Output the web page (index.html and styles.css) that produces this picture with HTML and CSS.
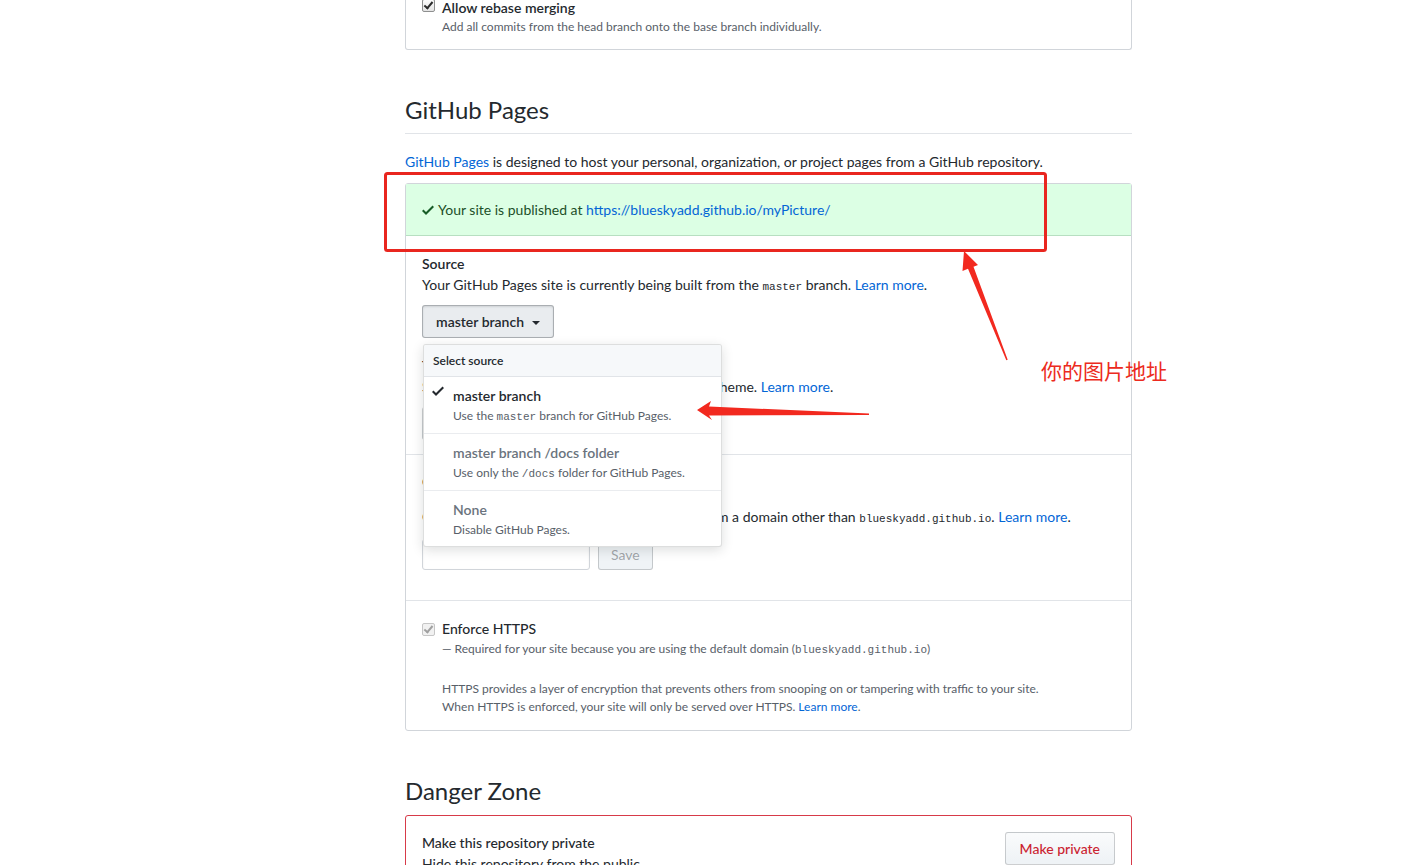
FILE: index.html
```html
<!DOCTYPE html>
<html lang="en">
  <head>
    <meta charset="UTF-8" />
    <title>Options</title>
    <link rel="stylesheet" href="styles.css">
  </head>
  <body>
    <div class="container">
      <div class="box box-top">
        <div class="form-checkbox">
          <input type="checkbox" checked />
          <label>Allow rebase merging</label>
          <p class="note">Add all commits from the head branch onto the base branch individually.</p>
        </div>
      </div>

      <h2 class="subhead">GitHub Pages</h2>
      <p class="intro"><a href="#">GitHub Pages</a> is designed to host your personal, organization, or project pages from a GitHub repository.</p>

      <div class="box">
        <div class="flash-success">
          <svg class="octicon" width="12" height="16" viewBox="0 0 12 16"><path d="M12 5l-8 8-4-4 1.5-1.5L4 10l6.5-6.5L12 5z"/></svg>
          Your site is published at <a href="#">https://blueskyadd.github.io/myPicture/</a>
        </div>

        <div class="box-row">
          <h4>Source</h4>
          <p>Your GitHub Pages site is currently being built from the <code>master</code> branch. <a href="#">Learn more</a>.</p>

          <div class="select-menu">
            <button class="btn selected">master branch <span class="caret"></span></button>

            <div class="select-menu-modal">
              <div class="select-menu-header">Select source</div>
              <div class="select-menu-item">
                <svg class="octicon check" width="12" height="16" viewBox="0 0 12 16"><path d="M12 5l-8 8-4-4 1.5-1.5L4 10l6.5-6.5L12 5z"/></svg>
                <div class="item-heading">master branch</div>
                <div class="description">Use the <code>master</code> branch for GitHub Pages.</div>
              </div>
              <div class="select-menu-item disabled">
                <div class="item-heading">master branch /docs folder</div>
                <div class="description">Use only the <code>/docs</code> folder for GitHub Pages.</div>
              </div>
              <div class="select-menu-item disabled">
                <div class="item-heading">None</div>
                <div class="description">Disable GitHub Pages.</div>
              </div>
            </div>
          </div>

          <h4 class="theme-heading">Theme chooser</h4>
          <p>Select a theme to publish your site with a Jekyll theme. <a href="#">Learn more</a>.</p>
          <button class="btn theme-btn">Choose a theme</button>
        </div>

        <div class="box-row">
          <h4>Custom domain</h4>
          <p class="domain-text">Custom domain allows you to serve your site from a domain other than <code>blueskyadd.github.io</code>. <a href="#">Learn more</a>.</p>
          <form class="domain-form">
            <input type="text" class="form-control" />
            <button type="button" class="btn" disabled>Save</button>
          </form>
        </div>

        <div class="box-row https-row">
          <div class="form-checkbox">
            <input type="checkbox" checked disabled />
            <label>Enforce HTTPS</label>
            <p class="note">— Required for your site because you are using the default domain (<code>blueskyadd.github.io</code>)</p>
          </div>
          <p class="https-info">
            HTTPS provides a layer of encryption that prevents others from snooping on or tampering with traffic to your site.<br />
            When HTTPS is enforced, your site will only be served over HTTPS. <a href="#">Learn more</a>.
          </p>
        </div>
      </div>

      <h2 class="subhead subhead-danger">Danger Zone</h2>
      <div class="box box-danger">
        <div class="box-row">
          <button class="btn btn-danger">Make private</button>
          <h4>Make this repository private</h4>
          <p>Hide this repository from the public.</p>
        </div>
      </div>
    </div>

    <!-- 截图上的红色标注 -->
    <div class="annotations">
      <svg width="1403" height="865" viewBox="0 0 1403 865">
        <rect x="385.5" y="173.5" width="660" height="77" rx="2" fill="none" stroke="#e9261f" stroke-width="3"/>
        <polygon fill="#f2291f" points="964,251 978,265 973.5,266.8 1007.7,359.7 1006.3,360.3 968,268.8 962.5,271"/>
        <polygon fill="#f2291f" points="697,410 711,401 709,406.5 869,413.5 869,415 709,415.5 712,420"/>
      </svg>
      <div class="annotation-label">你的图片地址</div>
    </div>
  </body>
</html>
```

FILE: styles.css
```css
html,
body {
  overflow: hidden;
}

body {
  margin: 0;
  font-family: Lato, "Noto Sans", sans-serif;
  font-size: 14px;
  line-height: 1.5;
  color: #24292e;
  background: #fff;
}

a {
  color: #0366d6;
  text-decoration: none;
}

code {
  font-family: "Liberation Mono", monospace;
  font-size: 11px;
  line-height: 1;
}

p {
  margin: 0;
}

h4 {
  margin: 0;
  font-size: 14px;
  font-weight: 600;
  line-height: 21px;
}

.container {
  width: 727px;
  margin-left: 405px;
}

.box {
  border: 1px solid #d1d5da;
  border-radius: 3px;
}

.box-top {
  border-top: 0;
  border-radius: 0 0 3px 3px;
  padding: 0 16px 13px;
}

.form-checkbox {
  padding-left: 20px;
}

.box-top .form-checkbox {
  margin-top: -3px;
}

.form-checkbox input {
  -webkit-appearance: none;
  appearance: none;
  float: left;
  position: relative;
  box-sizing: border-box;
  width: 13px;
  height: 13px;
  margin: 2px 0 0 -20px;
  border: 1px solid #8e8f8f;
  border-radius: 2px;
  background: linear-gradient(#fcfcfc, #e4e4e4);
}

.form-checkbox input:checked::after {
  content: "";
  position: absolute;
  top: 0;
  left: 3px;
  width: 3px;
  height: 7px;
  border: solid #2b2b2b;
  border-width: 0 2px 2px 0;
  transform: rotate(40deg);
}

.form-checkbox input:disabled {
  border-color: #c6c6c6;
  background: #f1f1f1;
}

.form-checkbox input:disabled::after {
  border-color: #a0a0a0;
}

.form-checkbox label {
  font-weight: 600;
  line-height: 21px;
}

.note {
  font-size: 12px;
  line-height: 18px;
  color: #586069;
}

.subhead {
  margin: 45px 0 17px;
  padding-bottom: 8px;
  border-bottom: 1px solid #e1e4e8;
  font-size: 24px;
  font-weight: 400;
  line-height: 30px;
}

.intro {
  margin-bottom: 11px;
}

.flash-success {
  padding: 15px 16px;
  background-color: #dcffe4;
  border-bottom: 1px solid #b7dfc1;
  color: #1d4f29;
}

.flash-success .octicon {
  fill: #165c26;
  vertical-align: -3px;
  margin-right: 1px;
}

.box-row {
  padding: 16px;
  border-top: 1px solid #e1e4e8;
}

.flash-success + .box-row {
  border-top: 0;
  padding-top: 17px;
  padding-bottom: 14px;
}

.btn {
  display: inline-block;
  padding: 6px 12px 5px;
  font-family: inherit;
  font-size: 14px;
  font-weight: 600;
  line-height: 20px;
  color: #24292e;
  background: linear-gradient(-180deg, #fafbfc 0%, #eff3f6 90%);
  border: 1px solid rgba(27, 31, 35, 0.2);
  border-radius: 3px;
}

.btn.selected {
  padding-left: 13px;
  padding-right: 13px;
  background: #e9ecef;
  border-color: rgba(27, 31, 35, 0.3);
  box-shadow: inset 0 1px 2px rgba(27, 31, 35, 0.12);
}

.caret {
  display: inline-block;
  width: 0;
  height: 0;
  margin-left: 4px;
  vertical-align: middle;
  border-top: 4px solid #24292e;
  border-right: 4px solid transparent;
  border-left: 4px solid transparent;
}

.select-menu {
  position: relative;
  margin-top: 10px;
}

.select-menu-modal {
  position: absolute;
  top: 39px;
  left: 1px;
  z-index: 10;
  width: 297px;
  background: #fff;
  border: 1px solid rgba(27, 31, 35, 0.15);
  border-radius: 3px;
  box-shadow: 0 3px 12px rgba(27, 31, 35, 0.15);
  overflow: hidden;
}

.select-menu-header {
  padding: 8px 10px 7px 9px;
  font-size: 12px;
  font-weight: 600;
  line-height: 16px;
  background: #f6f8fa;
  border-bottom: 1px solid #e1e4e8;
}

.select-menu-item {
  position: relative;
  padding: 8px 8px 8px 29px;
  border-bottom: 1px solid #eaecef;
}

.select-menu-item:last-child {
  border-bottom: 0;
  padding-bottom: 7px;
}

.select-menu-item .check {
  position: absolute;
  top: 6px;
  left: 8px;
  fill: #24292e;
}

.item-heading {
  font-weight: 600;
  line-height: 21px;
}

.select-menu-item .description {
  font-size: 12px;
  line-height: 19px;
  color: #586069;
}

.select-menu-item.disabled .item-heading {
  color: #6a737d;
}

.theme-heading {
  margin-top: 17px;
}

.theme-btn {
  margin-top: 10px;
}

.domain-text {
  margin-top: 14px;
}

.domain-form {
  display: flex;
  gap: 8px;
  align-items: center;
  margin: 12px 0 14px;
}

.form-control {
  width: 168px;
  height: 31px;
  box-sizing: border-box;
  padding: 6px 8px;
  border: 1px solid #d1d5da;
  border-radius: 3px;
  box-shadow: inset 0 1px 2px rgba(27, 31, 35, 0.075);
}

.domain-form .btn {
  height: 30px;
  padding: 4px 12px;
  font-weight: 400;
  color: rgba(36, 41, 46, 0.4);
  background: #eff3f6;
  border-color: rgba(27, 31, 35, 0.2);
}

.https-row {
  padding-bottom: 14px;
}

.https-row .form-checkbox input {
  margin-top: 5px;
}

.https-row .form-checkbox {
  margin-top: 1px;
}

.https-row label {
  font-weight: 500;
}

.https-row .note {
  line-height: 20px;
}

.https-info {
  margin: 21px 0 0 20px;
  font-size: 12px;
  line-height: 18px;
  color: #586069;
}

.subhead-danger {
  margin-bottom: 9px;
  padding-bottom: 0;
  border-bottom: 0;
}

.box-danger {
  border-color: #d73a49;
}

.box-danger .box-row {
  border-top: 0;
}

.box-danger h4 {
  font-weight: 500;
}

.btn-danger {
  float: right;
  padding-left: 14px;
  padding-right: 14px;
  color: #cb2431;
  font-weight: 500;
}

.annotations {
  position: absolute;
  top: 0;
  left: 0;
  z-index: 20;
  width: 1403px;
  height: 865px;
  pointer-events: none;
}

.annotations svg {
  display: block;
}

.annotation-label {
  position: absolute;
  top: 356px;
  left: 1041px;
  font-family: "Noto Sans CJK SC", sans-serif;
  font-size: 21px;
  line-height: 28px;
  color: #ec2a20;
}
```
